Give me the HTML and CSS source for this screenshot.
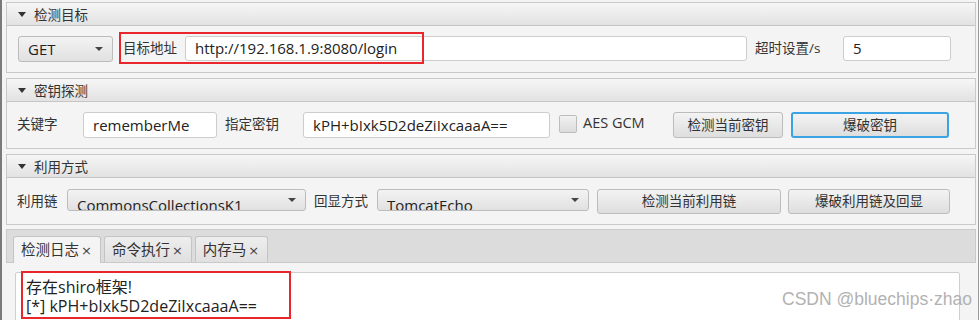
FILE: index.html
```html
<!DOCTYPE html>
<html lang="zh-CN">

<head>
    <meta charset="UTF-8">
    <meta name="viewport" content="width=device-width, initial-scale=1">
    <title>ShiroAttack</title>
    <link rel="stylesheet" href="styles.css">
</head>

<body>
    <div class="window">

        <!-- 检测目标 -->
        <div class="pane">
            <div class="pane-title"><span class="tri"></span>检测目标</div>
            <div class="pane-body">
                <div class="combo w-method">GET<span class="arrow"></span></div>
                <span class="label w-target">目标地址</span>
                <div class="field w-url">http://192.168.1.9:8080/login</div>
                <span class="label w-timeout">超时设置/s</span>
                <div class="field w-sec">5</div>
                <div class="mark mark-url"></div>
            </div>
        </div>

        <!-- 密钥探测 -->
        <div class="pane">
            <div class="pane-title"><span class="tri"></span>密钥探测</div>
            <div class="pane-body tall">
                <span class="label w-keyword">关键字</span>
                <div class="field w-remember">rememberMe</div>
                <span class="label w-keylabel">指定密钥</span>
                <div class="field w-key">kPH+bIxk5D2deZiIxcaaaA==</div>
                <span class="check"></span>
                <span class="label w-gcm">AES GCM</span>
                <div class="btn w-check-key">检测当前密钥</div>
                <div class="btn focused w-brute-key">爆破密钥</div>
            </div>
        </div>

        <!-- 利用方式 -->
        <div class="pane">
            <div class="pane-title"><span class="tri"></span>利用方式</div>
            <div class="pane-body low">
                <span class="label w-chain">利用链</span>
                <div class="combo clipped w-gadget">CommonsCollectionsK1<span class="arrow"></span></div>
                <span class="label w-echo">回显方式</span>
                <div class="combo clipped w-echobox">TomcatEcho<span class="arrow"></span></div>
                <div class="btn w-check-chain">检测当前利用链</div>
                <div class="btn w-brute-chain">爆破利用链及回显</div>
            </div>
        </div>

        <!-- 日志 -->
        <div class="tabs">
            <div class="tab-head">
                <div class="tab active">检测日志<span class="x">×</span></div>
                <div class="tab">命令执行<span class="x">×</span></div>
                <div class="tab">内存马<span class="x">×</span></div>
            </div>
            <div class="tab-body">
                <div class="log">
                    <div>存在shiro框架!</div>
                    <div>[*] kPH+bIxk5D2deZiIxcaaaA==</div>
                </div>
                <div class="mark mark-log"></div>
                <div class="watermark">CSDN @bluechips·zhao</div>
            </div>
        </div>

    </div>
</body>

</html>
```

FILE: styles.css
```css
html, body {
    margin: 0;
    height: 320px;
    overflow: hidden;
}

body {
    background: #f4f4f4;
    font-family: "Open Sans", "Noto Sans CJK SC", sans-serif;
    font-size: 13.5px;
    color: #333;
}

.window {
    width: 970px;
    height: 320px;
    padding: 2px 2px 0 4px;
    border-left: 2px solid #7a7a7a;
    border-right: 1px solid #9a9a9a;
}

/* titled panes */
.pane {
    border: 1px solid #c9c9c9;
    margin-bottom: 5px;
    background: #f4f4f4;
}

.pane-title {
    height: 22px;
    display: flex;
    align-items: center;
    padding-left: 11px;
    background: linear-gradient(#f6f6f6, #e2e2e2);
    border-bottom: 1px solid #c6c6c6;
    color: #333;
}

.tri {
    width: 0;
    height: 0;
    border-left: 4px solid transparent;
    border-right: 4px solid transparent;
    border-top: 5px solid #333;
    margin-right: 8px;
}

.pane-body {
    position: relative;
    height: 46px;
    box-sizing: border-box;
    padding: 10px 0 0 10px;
    display: flex;
    align-items: flex-start;
}

.pane-body.low {
    padding-top: 11px;
}

.label {
    line-height: 25px;
    white-space: nowrap;
    flex: none;
}

/* inputs */
.field {
    height: 25px;
    box-sizing: border-box;
    border: 1px solid #cdcdcd;
    border-radius: 3px;
    background: #fff;
    padding-left: 9px;
    font-size: 15px;
    line-height: 23px;
    color: #222;
    flex: none;
}

.tall .field {
    height: 26px;
    line-height: 24px;
}

.combo {
    position: relative;
    height: 26px;
    box-sizing: border-box;
    border: 1px solid #bcbcbc;
    border-radius: 3px;
    background: linear-gradient(#f3f3f3, #e1e1e1);
    padding-left: 9px;
    font-size: 15px;
    line-height: 24px;
    color: #222;
    flex: none;
}

/* the value text sits too low and gets cut at the bottom */
.combo.clipped {
    height: 22px;
    line-height: 31px;
    overflow: hidden;
}

.arrow {
    position: absolute;
    right: 9px;
    top: 10px;
    width: 0;
    height: 0;
    border-left: 4px solid transparent;
    border-right: 4px solid transparent;
    border-top: 4px solid #444;
}

.clipped .arrow {
    top: 8px;
}

.btn {
    height: 26px;
    box-sizing: border-box;
    border: 1px solid #bcbcbc;
    border-radius: 3px;
    background: linear-gradient(#f3f3f3, #dedede);
    text-align: center;
    line-height: 24px;
    color: #333;
    flex: none;
}

.low .btn {
    height: 25px;
    line-height: 23px;
}

.btn.focused {
    border: 2px solid #3aa3e3;
    line-height: 22px;
}

.check {
    width: 18px;
    height: 18px;
    box-sizing: border-box;
    margin: 3px 0 0 9px;
    border: 1px solid #bdbdbd;
    border-radius: 2px;
    background: linear-gradient(#f2f2f2, #dcdcdc);
    flex: none;
}

/* widths of row items */
.w-method { width: 95px; margin-left: 1px; }
.w-target { width: 53px; margin-left: 10px; }
.w-url { width: 562px; margin-left: 9px; }
.w-timeout { width: 67px; margin-left: 8px; }
.w-sec { width: 108px; margin-left: 21px; }

.w-keyword { width: 66px; }
.w-remember { width: 134px; }
.w-keylabel { width: 78px; margin-left: 8px; }
.w-key { width: 247px; }
.w-gcm { margin-left: 6px; line-height: 22px; font-size: 14.5px; width: 90px; }
.w-check-key { width: 110px; }
.w-brute-key { width: 158px; margin-left: 8px; }

.w-chain { width: 50px; }
.w-gadget { width: 239px; }
.w-echo { width: 63px; margin-left: 8px; }
.w-echobox { width: 212px; }
.w-check-chain { width: 184px; margin-left: 8px; }
.w-brute-chain { width: 162px; margin-left: 7px; }

/* red annotation boxes */
.mark {
    position: absolute;
    border: 2px solid #e8262b;
    box-sizing: border-box;
}

.mark-url {
    left: 112px;
    top: 6px;
    width: 305px;
    height: 32px;
}

.mark-log {
    left: 15px;
    top: 8px;
    width: 270px;
    height: 48px;
}

/* tab pane */
.tabs {
    margin-top: -1px;
}

.tab-head {
    height: 34px;
    box-sizing: border-box;
    background: #dcdcdc;
    border: 1px solid #cacaca;
    padding: 7px 0 0 6px;
    display: flex;
    align-items: flex-end;
    gap: 3px;
}

.tab {
    height: 26px;
    box-sizing: border-box;
    padding: 0 8px 0 7px;
    border: 1px solid #c4c4c4;
    border-bottom: none;
    border-radius: 3px 3px 0 0;
    background: linear-gradient(#eeeeee, #e0e0e0);
    font-size: 14.5px;
    line-height: 26px;
    color: #333;
}

.tab.active {
    height: 27px;
    margin-bottom: -1px;
    background: #f4f4f4;
}

.x {
    font-family: "DejaVu Sans", sans-serif;
    font-size: 13px;
    margin-left: 2px;
    color: #444;
}

.tab-body {
    position: relative;
    height: 60px;
    padding: 9px 0 0 9px;
    box-sizing: border-box;
}

.log {
    width: 945px;
    height: 60px;
    box-sizing: border-box;
    background: #fff;
    border: 1px solid #cfcfcf;
    border-radius: 2px;
    padding: 5px 0 0 10px;
    font-size: 16px;
    line-height: 19px;
    color: #222;
}

.watermark {
    position: absolute;
    left: 776px;
    top: 26px;
    font-family: "Liberation Sans", Arial, sans-serif;
    font-size: 17.5px;
    color: #b2b2b2;
    white-space: nowrap;
}
```
